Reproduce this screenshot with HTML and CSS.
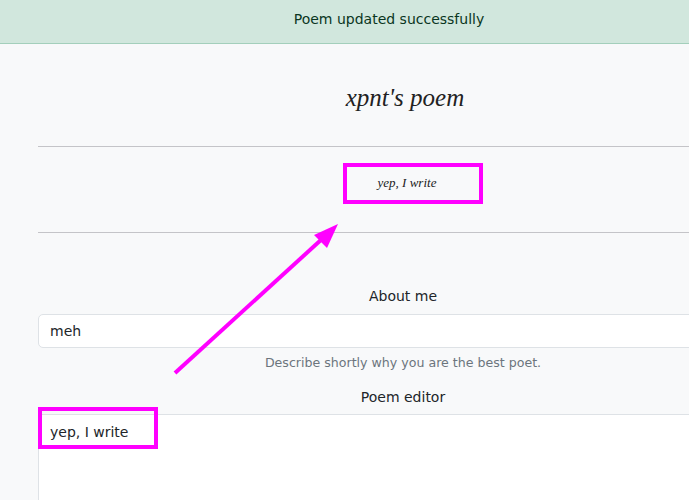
FILE: index.html
```html
<!DOCTYPE html>
<html>
<head>
<meta charset="utf-8">
<link rel="stylesheet" href="styles.css">
</head>
<body>
<div class="page">
  <div class="toast">Poem updated successfully</div>
  <main class="container">
    <h1 class="title">xpnt's poem</h1>
    <hr class="rule">
    <div class="poem">yep, I write</div>
    <hr class="rule rule-second">
    <label class="label label-about">About me</label>
    <div class="input">meh</div>
    <div class="help">Describe shortly why you are the best poet.</div>
    <label class="label label-editor">Poem editor</label>
    <div class="editor">yep, I write</div>
  </main>
  <div class="mark mark-poem"></div>
  <div class="mark mark-editor"></div>
  <svg class="arrow" width="689" height="500" viewBox="0 0 689 500">
    <line x1="175" y1="373" x2="322" y2="239" stroke="#ff00ff" stroke-width="4"/>
    <polygon points="338,224 314,235 327,248" fill="#ff00ff"/>
  </svg>
</div>
</body>
</html>
```
FILE: styles.css
```css
html, body {
  margin: 0;
  padding: 0;
  background: #f8f9fa;
  overflow: hidden;
}
body {
  font-family: "DejaVu Sans", sans-serif;
  color: #212529;
  width: 689px;
  height: 500px;
}
.page {
  position: relative;
  width: 778px;
  height: 500px;
}
.toast {
  height: 43px;
  box-sizing: border-box;
  padding-top: 10px;
  border-bottom: 1px solid #a3cfbb;
  background: #d1e7dd;
  color: #0a3622;
  font-size: 14px;
  line-height: 18px;
  text-align: center;
  height: 44px;
}
.container {
  margin-left: 38px;
  width: 730px;
  display: flex;
  flex-direction: column;
  align-items: stretch;
  text-align: center;
}
.title {
  margin: 39px 0 0;
  font-family: "Liberation Serif", serif;
  font-style: italic;
  font-weight: normal;
  font-size: 25px;
  line-height: 30px;
  color: #222;
  padding-left: 4px;
}
.rule {
  margin: 33px 0 0;
  border: 0;
  border-top: 1px solid #c4c4c8;
  height: 0;
}
.poem {
  margin-top: 26px;
  font-family: "Liberation Serif", serif;
  font-style: italic;
  font-size: 13px;
  line-height: 20px;
  color: #222;
  padding-left: 8px;
}
.rule-second {
  margin-top: 39px;
}
.label {
  display: block;
  font-size: 14px;
  line-height: 20px;
  color: #212529;
}
.label-about {
  margin-top: 53px;
}
.input {
  margin-top: 8px;
  height: 32px;
  border: 1px solid #dee2e6;
  border-radius: 5px;
  background: #fff;
  text-align: left;
  padding-left: 11px;
  font-size: 14px;
  line-height: 32px;
  color: #212529;
}
.help {
  margin-top: 7px;
  font-size: 12.6px;
  line-height: 16px;
  color: #6c757d;
}
.label-editor {
  margin-top: 16px;
}
.editor {
  margin-top: 7px;
  height: 120px;
  border: 1px solid #dee2e6;
  background: #fff;
  text-align: left;
  padding: 7px 11px;
  font-size: 14px;
  line-height: 20px;
  color: #212529;
}
.mark {
  position: absolute;
  border: 4px solid #ff00ff;
  box-sizing: border-box;
}
.mark-poem {
  left: 343px;
  top: 163px;
  width: 140px;
  height: 41px;
}
.mark-editor {
  left: 38px;
  top: 407px;
  width: 120px;
  height: 42px;
}
.arrow {
  position: absolute;
  left: 0;
  top: 0;
}
```
